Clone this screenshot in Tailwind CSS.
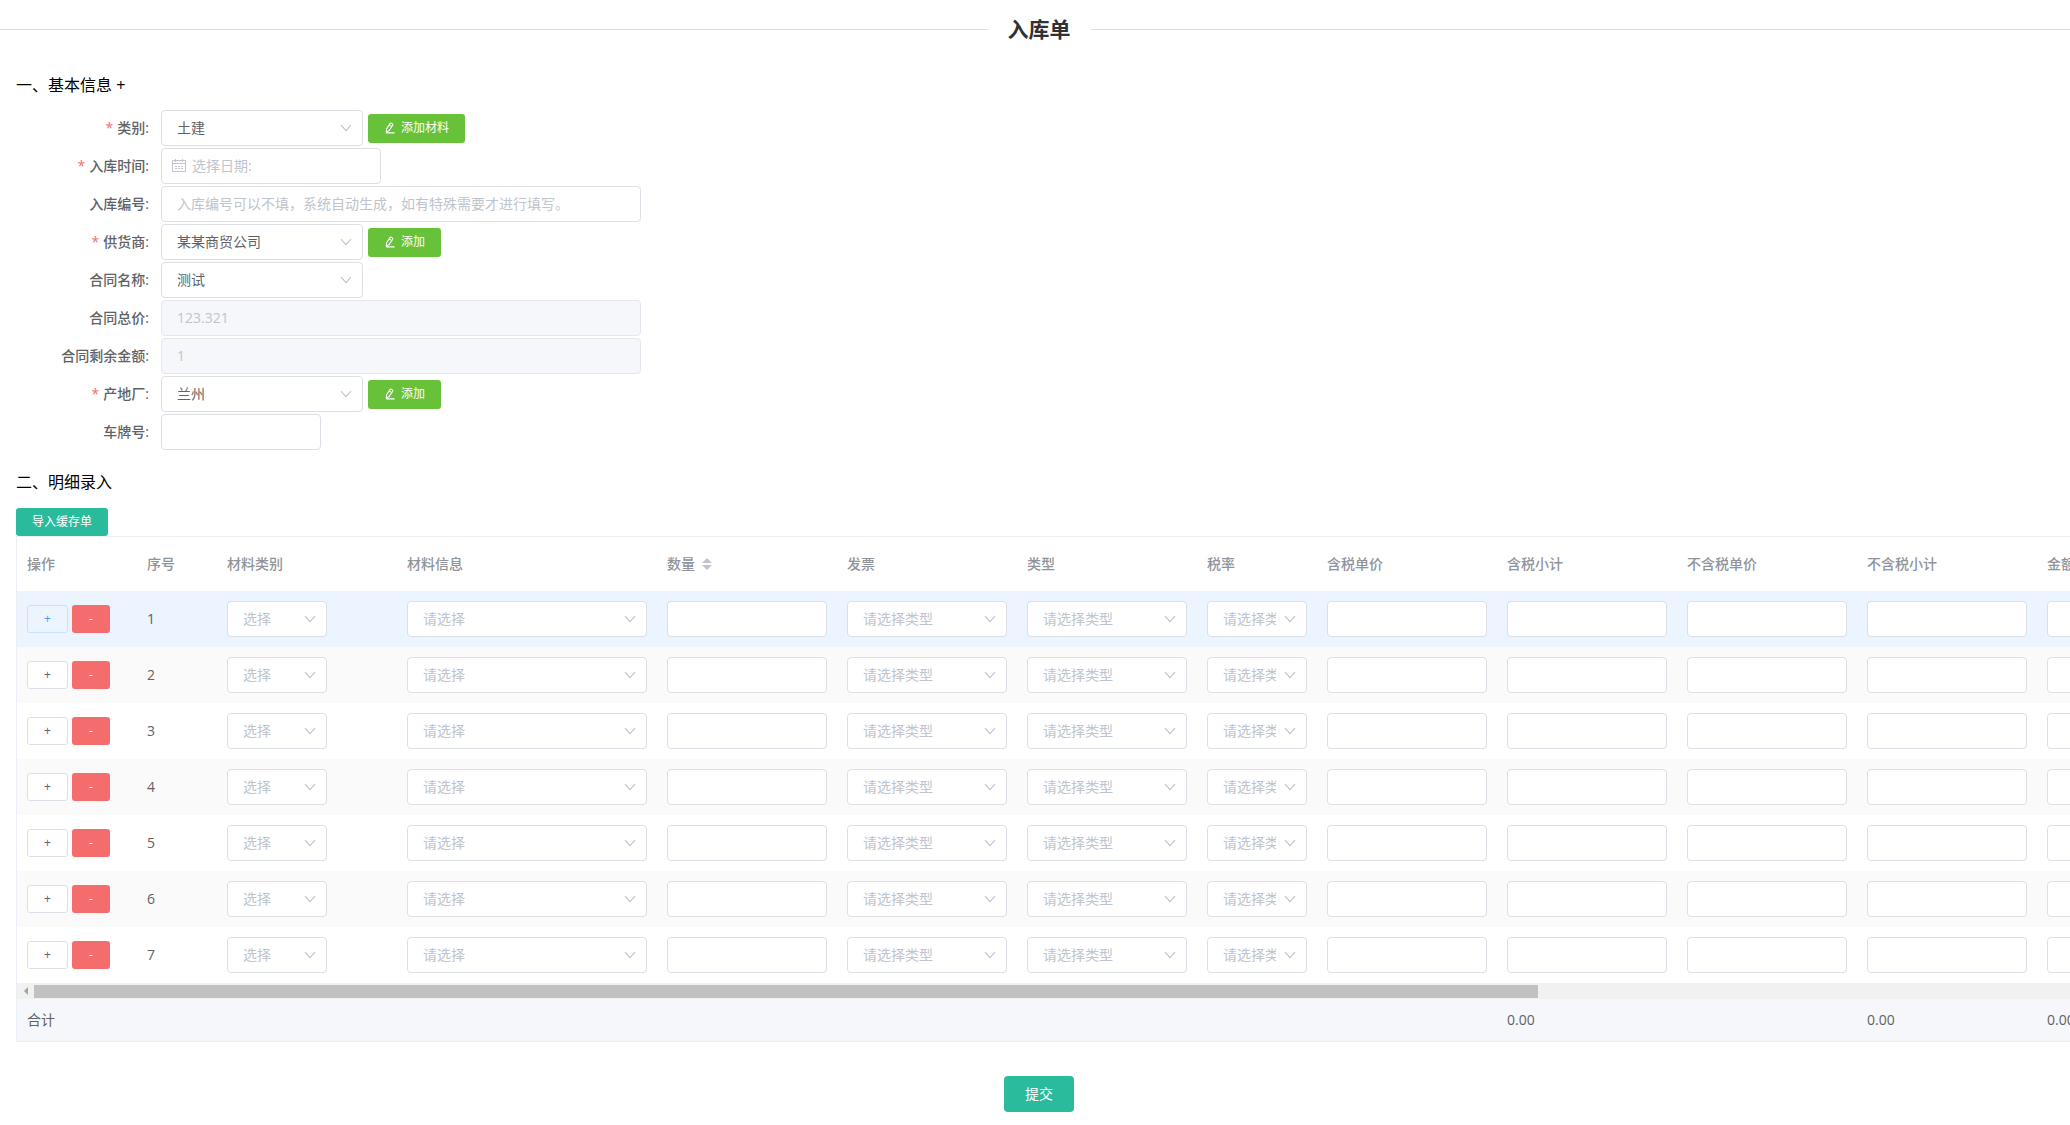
<!DOCTYPE html>
<html lang="zh-CN">
<head>
<meta charset="utf-8">
<meta name="viewport" content="width=device-width, initial-scale=1">
<title>入库单</title>
<script src="https://cdn.jsdelivr.net/npm/@tailwindcss/browser@4"></script>
</head>
<body class="bg-white font-['Open_Sans','Noto_Sans_CJK_SC',sans-serif] text-sm text-[#606266] overflow-x-hidden">

<svg class="hidden" aria-hidden="true">
  <symbol id="chevron" viewBox="0 0 12 12"><path d="M1 3.2 6 8.6l5-5.4" fill="none" stroke="currentColor" stroke-width="1.1"/></symbol>
  <symbol id="edit" viewBox="0 0 12 12"><path d="M2.2 10 2.6 6.8 6 1.6q.6-.8 1.5-.3l.9.6q.8.6.3 1.4L5.2 8.5zM5.2 2.9l2.5 1.7M2 10.9H10.6" fill="none" stroke="currentColor" stroke-width="1.1" stroke-linejoin="round"/></symbol>
  <symbol id="calendar" viewBox="0 0 14 14"><path d="M.5 2.5h13v11H.5zM.5 5.5h13M3.5 1v3M10.5 1v3M3 8.5h2M6 8.5h2M9 8.5h2M3 10.5h2M6 10.5h2M9 10.5h2" fill="none" stroke="currentColor"/></symbol>
</svg>

<main class="w-[calc(100%+8px)]">
  <header class="flex h-[58px] items-center gap-5">
    <span class="h-px flex-1 bg-[#dcdfe0]"></span>
    <h1 class="text-[21px] leading-8 font-bold text-[#303133]">入库单</h1>
    <span class="h-px flex-1 bg-[#dcdfe0]"></span>
  </header>

  <form class="pl-4">
    <h2 class="mt-[15px] text-base leading-6 text-black">一、基本信息 +</h2>

    <div class="mt-[13px] flex flex-col gap-0.5">
      <div class="flex h-9 items-center">
        <label for="category" class="w-[145px] pr-3 text-right font-medium"><span class="mr-1 text-[#f56c6c]">*</span>类别:</label>
        <div class="relative h-9 w-[202px]">
          <select id="category" class="h-9 w-full appearance-none rounded border border-[#dcdfe6] bg-white pr-[30px] pl-[15px]"><option>土建</option></select>
          <svg class="pointer-events-none absolute top-3 right-[11px] size-3 text-[#c0c4cc]"><use href="#chevron"/></svg>
        </div>
        <button type="button" class="ml-[5px] flex h-[29px] items-center gap-[5px] rounded-[3px] bg-[#67c23a] px-4 text-xs text-white"><svg class="size-3"><use href="#edit"/></svg>添加材料</button>
      </div>
      <div class="flex h-9 items-center">
        <label for="date" class="w-[145px] pr-3 text-right font-medium"><span class="mr-1 text-[#f56c6c]">*</span>入库时间:</label>
        <div class="relative h-9 w-[220px]">
          <input id="date" placeholder="选择日期:" class="block h-9 w-full rounded border border-[#dcdfe6] pr-4 pb-0.5 pl-[30px] placeholder:text-[#c0c4cc]">
          <svg class="pointer-events-none absolute top-2.5 left-[11px] size-3.5 text-[#c0c4cc]"><use href="#calendar"/></svg>
        </div>
      </div>
      <div class="flex h-9 items-center">
        <label for="code" class="w-[145px] pr-3 text-right font-medium">入库编号:</label>
        <input id="code" placeholder="入库编号可以不填，系统自动生成，如有特殊需要才进行填写。" class="h-9 w-[480px] rounded border border-[#dcdfe6] px-[15px] pb-0.5 placeholder:text-[#c0c4cc]">
      </div>
      <div class="flex h-9 items-center">
        <label for="supplier" class="w-[145px] pr-3 text-right font-medium"><span class="mr-1 text-[#f56c6c]">*</span>供货商:</label>
        <div class="relative h-9 w-[202px]">
          <select id="supplier" class="h-9 w-full appearance-none rounded border border-[#dcdfe6] bg-white pr-[30px] pl-[15px]"><option>某某商贸公司</option></select>
          <svg class="pointer-events-none absolute top-3 right-[11px] size-3 text-[#c0c4cc]"><use href="#chevron"/></svg>
        </div>
        <button type="button" class="ml-[5px] flex h-[29px] items-center gap-[5px] rounded-[3px] bg-[#67c23a] px-4 text-xs text-white"><svg class="size-3"><use href="#edit"/></svg>添加</button>
      </div>
      <div class="flex h-9 items-center">
        <label for="contract" class="w-[145px] pr-3 text-right font-medium">合同名称:</label>
        <div class="relative h-9 w-[202px]">
          <select id="contract" class="h-9 w-full appearance-none rounded border border-[#dcdfe6] bg-white pr-[30px] pl-[15px]"><option>测试</option></select>
          <svg class="pointer-events-none absolute top-3 right-[11px] size-3 text-[#c0c4cc]"><use href="#chevron"/></svg>
        </div>
      </div>
      <div class="flex h-9 items-center">
        <label for="total" class="w-[145px] pr-3 text-right font-medium">合同总价:</label>
        <input id="total" disabled value="123.321" class="h-9 w-[480px] rounded border border-[#e4e7ed] bg-[#f5f7fa] px-[15px] pb-0.5 text-[#c0c4cc]">
      </div>
      <div class="flex h-9 items-center">
        <label for="remaining" class="w-[145px] pr-3 text-right font-medium">合同剩余金额:</label>
        <input id="remaining" disabled value="1" class="h-9 w-[480px] rounded border border-[#e4e7ed] bg-[#f5f7fa] px-[15px] pb-0.5 text-[#c0c4cc]">
      </div>
      <div class="flex h-9 items-center">
        <label for="origin" class="w-[145px] pr-3 text-right font-medium"><span class="mr-1 text-[#f56c6c]">*</span>产地厂:</label>
        <div class="relative h-9 w-[202px]">
          <select id="origin" class="h-9 w-full appearance-none rounded border border-[#dcdfe6] bg-white pr-[30px] pl-[15px]"><option>兰州</option></select>
          <svg class="pointer-events-none absolute top-3 right-[11px] size-3 text-[#c0c4cc]"><use href="#chevron"/></svg>
        </div>
        <button type="button" class="ml-[5px] flex h-[29px] items-center gap-[5px] rounded-[3px] bg-[#67c23a] px-4 text-xs text-white"><svg class="size-3"><use href="#edit"/></svg>添加</button>
      </div>
      <div class="flex h-9 items-center">
        <label for="plate" class="w-[145px] pr-3 text-right font-medium">车牌号:</label>
        <input id="plate" class="h-9 w-40 rounded border border-[#dcdfe6] px-[15px]">
      </div>
    </div>

    <h2 class="mt-5 text-base leading-6 text-black">二、明细录入</h2>
    <button type="button" class="mt-[14px] block h-7 rounded-[3px] bg-[#2abb9c] px-4 text-xs text-white">导入缓存单</button>

    <section class="overflow-hidden border border-[#ebeef5]">
      <table class="w-[2200px] table-fixed text-left">
        <colgroup><col class="w-[120px]"><col class="w-20"><col class="w-[180px]"><col class="w-[260px]"><col class="w-[180px]"><col class="w-[180px]"><col class="w-[180px]"><col class="w-[120px]"><col class="w-[180px]"><col class="w-[180px]"><col class="w-[180px]"><col class="w-[180px]"><col class="w-[180px]"></colgroup>
        <thead class="text-[#909399]">
          <tr class="h-[54px]">
            <th class="px-2.5 font-medium">操作</th>
            <th class="px-2.5 font-medium">序号</th>
            <th class="px-2.5 font-medium">材料类别</th>
            <th class="px-2.5 font-medium">材料信息</th>
            <th class="px-2.5 font-medium"><span class="flex items-center gap-[7px]">数量<svg class="h-3 w-2.5 text-[#c0c4cc]" viewBox="0 0 10 12" fill="currentColor"><path d="M5 0l5 5H0zM0 7h10l-5 5z"/></svg></span></th>
            <th class="px-2.5 font-medium">发票</th>
            <th class="px-2.5 font-medium">类型</th>
            <th class="px-2.5 font-medium">税率</th>
            <th class="px-2.5 font-medium">含税单价</th>
            <th class="px-2.5 font-medium">含税小计</th>
            <th class="px-2.5 font-medium">不含税单价</th>
            <th class="px-2.5 font-medium">不含税小计</th>
            <th class="px-2.5 font-medium">金额</th>
          </tr>
        </thead>
        <tbody id="rows"></tbody>
      </table>

      <div class="flex h-4 items-center bg-[#f1f1f1]" aria-hidden="true">
        <span class="flex w-[17px] justify-center"><svg class="h-2 w-1 text-[#a3a3a3]" viewBox="0 0 4 8" fill="currentColor"><path d="M4 0v8L0 4z"/></svg></span>
        <span class="h-[13px] w-[73%] bg-[#c1c1c1]"></span>
      </div>

      <table class="w-[2200px] table-fixed bg-[#f5f7fa]">
        <colgroup><col class="w-[120px]"><col class="w-20"><col class="w-[180px]"><col class="w-[260px]"><col class="w-[180px]"><col class="w-[180px]"><col class="w-[180px]"><col class="w-[120px]"><col class="w-[180px]"><col class="w-[180px]"><col class="w-[180px]"><col class="w-[180px]"><col class="w-[180px]"></colgroup>
        <tbody>
          <tr class="h-[42px]">
            <td class="px-2.5">合计</td><td></td><td></td><td></td><td></td><td></td><td></td><td></td><td></td>
            <td class="px-2.5">0.00</td><td></td>
            <td class="px-2.5">0.00</td>
            <td class="px-2.5">0.00</td>
          </tr>
        </tbody>
      </table>
    </section>
  </form>

  <footer class="flex justify-center pt-[34px] pb-3">
    <button type="submit" class="h-9 rounded bg-[#2abb9c] px-[21px] text-white">提交</button>
  </footer>
</main>

<script>
  const select = (label, text, wide) => `
    <td class="px-2.5"><div class="relative h-9 ${wide}">
      <select aria-label="${label}" class="h-9 w-full appearance-none rounded border border-[#dcdfe6] bg-white pr-[30px] pl-[15px] text-[#c0c4cc]"><option>${text}</option></select>
      <svg class="pointer-events-none absolute top-3 right-[11px] size-3 text-[#c0c4cc]"><use href="#chevron"/></svg>
    </div></td>`;
  const input = (label) => `
    <td class="px-2.5"><input aria-label="${label}" class="block h-9 w-40 rounded border border-[#dcdfe6] bg-white px-[15px]"></td>`;
  const addActive = 'border-[#c6e2ff] bg-[#ecf5ff] text-[#409eff]';
  const addPlain = 'border-[#dcdfe6] bg-white text-[#606266]';

  document.getElementById('rows').innerHTML = [1, 2, 3, 4, 5, 6, 7].map((n) => `
    <tr class="h-14 ${n === 1 ? 'bg-[#ebf4ff]' : n % 2 ? 'bg-white' : 'bg-[#fafafa]'}">
      <td class="px-2.5"><div class="flex gap-1">
        <button type="button" class="h-7 w-[41px] rounded-[3px] border text-xs ${n === 1 ? addActive : addPlain}">+</button>
        <button type="button" class="h-7 w-[38px] rounded-[3px] bg-[#f56c6c] text-xs text-white">-</button>
      </div></td>
      <td class="px-2.5">${n}</td>
      ${select('材料类别', '选择', 'w-[100px]')}
      ${select('材料信息', '请选择', 'w-60')}
      ${input('数量')}
      ${select('发票', '请选择类型', 'w-40')}
      ${select('类型', '请选择类型', 'w-40')}
      ${select('税率', '请选择类型', 'w-[100px]')}
      ${input('含税单价')}
      ${input('含税小计')}
      ${input('不含税单价')}
      ${input('不含税小计')}
      ${input('金额')}
    </tr>`).join('');
</script>
</body>
</html>
